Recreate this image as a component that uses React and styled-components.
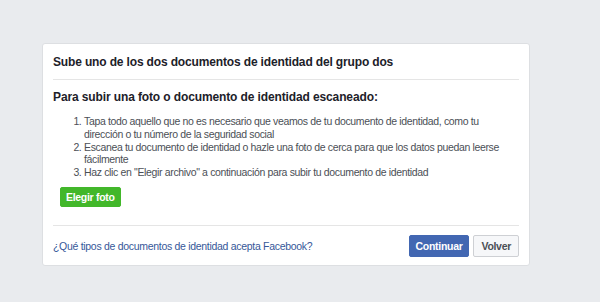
import React from "react";
import styled, { createGlobalStyle } from "styled-components";

const GlobalStyle = createGlobalStyle`
  html, body {
    margin: 0;
    padding: 0;
    background: #e9ebee;
    font-family: "Liberation Sans", Arial, sans-serif;
  }
`;

const Page = styled.div`
  padding: 43px 0 0 42px;
  height: 302px;
  box-sizing: border-box;
`;

const Card = styled.div`
  width: 488px;
  box-sizing: border-box;
  background: #fff;
  border: 1px solid #dddfe2;
  border-radius: 3px;
  padding: 0 10px;
`;

const Header = styled.div`
  padding: 9px 0 8px;
  border-bottom: 1px solid #e5e5e5;
  font-size: 12px;
  line-height: 18px;
  font-weight: bold;
  letter-spacing: -0.15px;
  color: #1d2129;
`;

const Body = styled.div`
  padding: 8px 0 18px;
  border-bottom: 1px solid #e5e5e5;
`;

const Heading = styled.div`
  font-size: 12px;
  line-height: 18px;
  font-weight: bold;
  letter-spacing: -0.12px;
  color: #1d2129;
`;

const Steps = styled.ol`
  margin: 9px 0 8px;
  padding-left: 31px;
  font-size: 10.5px;
  line-height: 12.8px;
  color: #4b4f56;
  letter-spacing: -0.35px;
`;

const Button = styled.button`
  font-family: "Liberation Sans", Arial, sans-serif;
  font-weight: bold;
  font-size: 10.5px;
  letter-spacing: -0.3px;
  border-radius: 2px;
  cursor: pointer;
  padding: 0 ${(p) => p.$px || 8}px;
  margin-left: ${(p) => p.$indent || 0}px;
  height: ${(p) => p.$h || 20}px;
  border: 1px solid ${(p) => p.$border};
  background: ${(p) => p.$bg};
  color: ${(p) => p.$color};
`;

const Footer = styled.div`
  display: flex;
  align-items: center;
  justify-content: space-between;
  padding: 9px 0 8px;
`;

const Link = styled.a`
  font-size: 10.5px;
  letter-spacing: -0.3px;
  color: #365899;
  text-decoration: none;
`;

const Actions = styled.div`
  display: flex;
  gap: 4px;
`;

export default function App() {
  return (
    <Page>
      <GlobalStyle />
      <Card>
        <Header>Sube uno de los dos documentos de identidad del grupo dos</Header>
        <Body>
          <Heading>Para subir una foto o documento de identidad escaneado:</Heading>
          <Steps>
            <li>
              Tapa todo aquello que no es necesario que veamos de tu documento de
              identidad, como tu dirección o tu número de la seguridad social
            </li>
            <li>
              Escanea tu documento de identidad o hazle una foto de cerca para que
              los datos puedan leerse fácilmente
            </li>
            <li>
              Haz clic en "Elegir archivo" a continuación para subir tu documento
              de identidad
            </li>
          </Steps>
          <Button $indent={7} $px={5} $bg="#42b72a" $border="#42b72a" $color="#fff">
            Elegir foto
          </Button>
        </Body>
        <Footer>
          <Link href="#">¿Qué tipos de documentos de identidad acepta Facebook?</Link>
          <Actions>
            <Button $h={22} $px={6} $bg="#4267b2" $border="#4267b2" $color="#fff">
              Continuar
            </Button>
            <Button $h={22} $px={7} $bg="#f6f7f9" $border="#ced0d4" $color="#4b4f56">
              Volver
            </Button>
          </Actions>
        </Footer>
      </Card>
    </Page>
  );
}
